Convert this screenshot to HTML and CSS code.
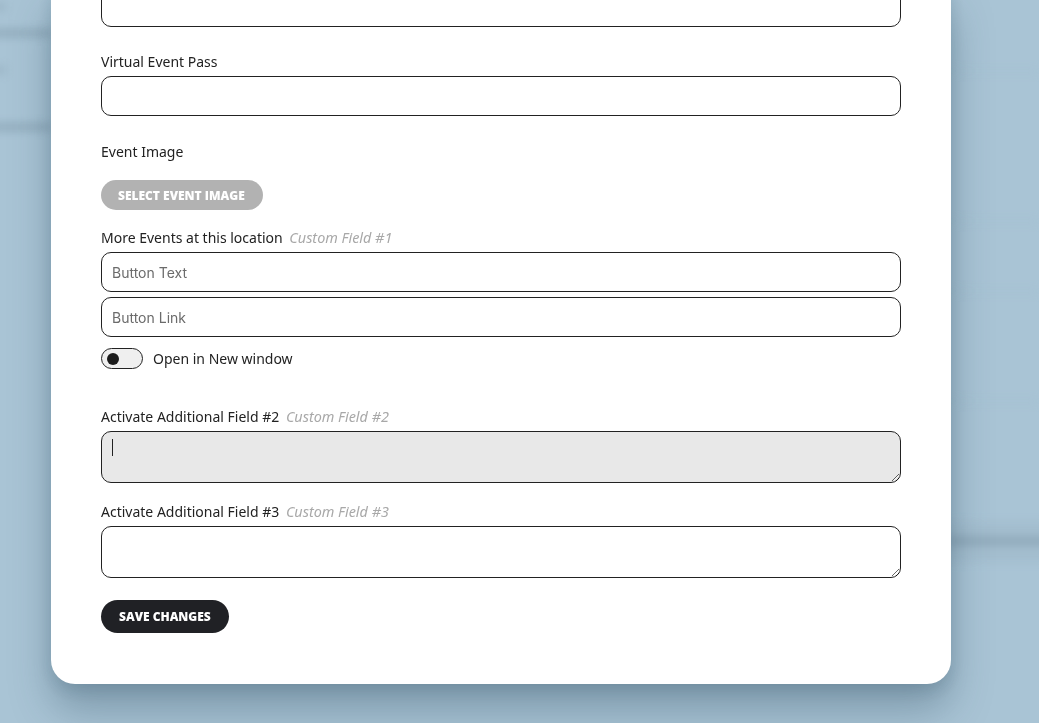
FILE: index.html
```html
<!DOCTYPE html>
<html lang="en">
<head>
<meta charset="utf-8">
<title>Edit Event</title>
<link rel="stylesheet" href="styles.css">
</head>
<body>
  <div class="backdrop" aria-hidden="true">
    <div class="bd-text bd-l1"></div>
    <div class="bd-text bd-l2"></div>
    <div class="bd-dot bd-d1"></div>
    <div class="bd-dot bd-d2"></div>
    <div class="bd-rule bd-r1"></div>
    <div class="bd-rule bd-r2"></div>
    <div class="bd-rule bd-r3"></div>
    <div class="bd-rule bd-r4"></div>
    <div class="bd-band"><span class="bd-band-text"></span></div>
  </div>

  <div class="overlay">
    <form class="modal">
      <div class="field">
        <input class="input" type="text">
      </div>

      <div class="field field-pass">
        <label class="label">Virtual Event Pass</label>
        <input class="input" type="text">
      </div>

      <div class="field field-image">
        <label class="label">Event Image</label>
        <button type="button" class="btn btn-muted">Select Event Image</button>
      </div>

      <div class="field field-more">
        <label class="label">More Events at this location <em class="hint">Custom Field #1</em></label>
        <div class="stack">
          <input class="input" type="text" placeholder="Button Text">
          <input class="input" type="text" placeholder="Button Link">
        </div>
        <div class="toggle-row">
          <span class="toggle"><span class="knob"></span></span>
          <span class="toggle-label">Open in New window</span>
        </div>
      </div>

      <div class="field field-extra2">
        <label class="label">Activate Additional Field #2 <em class="hint">Custom Field #2</em></label>
        <div class="area-wrap">
          <textarea class="area is-focused"></textarea>
          <span class="caret"></span>
        </div>
      </div>

      <div class="field field-extra3">
        <label class="label">Activate Additional Field #3 <em class="hint">Custom Field #3</em></label>
        <div class="area-wrap">
          <textarea class="area"></textarea>
        </div>
      </div>

      <div class="actions">
        <button type="button" class="btn btn-dark">Save Changes</button>
      </div>
    </form>
  </div>
</body>
</html>
```

FILE: styles.css
```css
* {
  box-sizing: border-box;
}

html, body {
  margin: 0;
  height: 100%;
  overflow: hidden;
}

body {
  background: #a9c4d5;
  font-family: "Noto Sans", "Open Sans", sans-serif;
  color: #222;
}

/* Blurred page behind the dialog */
.backdrop {
  position: fixed;
  inset: 0;
  filter: blur(5px);
}

.bd-text {
  position: absolute;
  left: -10px;
  width: 62px;
  height: 6px;
  background: #8aa4b5;
  border-radius: 3px;
}
.bd-l1 { top: 30px; }
.bd-l2 { top: 124px; }

.bd-dot {
  position: absolute;
  left: -4px;
  width: 9px;
  height: 6px;
  background: #93adbe;
}
.bd-d1 { top: 4px; }
.bd-d2 { top: 67px; }

.bd-rule {
  position: absolute;
  left: 950px;
  right: 0;
  height: 2px;
  background: #a4bfd0;
}
.bd-r1 { top: 70px; }
.bd-r2 { top: 220px; }
.bd-r3 { top: 290px; }
.bd-r4 { top: 400px; }

.bd-band {
  position: absolute;
  left: 935px;
  right: -10px;
  top: 522px;
  height: 40px;
  background: #a3bdce;
}
.bd-band-text {
  position: absolute;
  left: 12px;
  right: 0;
  top: 16px;
  height: 6px;
  background: #87a1b2;
  border-radius: 3px;
}

/* Dialog */
.overlay {
  position: fixed;
  inset: 0;
  display: flex;
  align-items: flex-end;
  padding: 0 0 39px 51px;
}

.modal {
  width: 900px;
  background: #fff;
  border-radius: 0 0 24px 24px;
  padding: 0 50px 51px;
  box-shadow: 0 26px 40px rgba(40, 70, 90, 0.34), 0 6px 16px rgba(40, 70, 90, 0.16);
  display: flex;
  flex-direction: column;
}

.field {
  display: flex;
  flex-direction: column;
  margin-bottom: 25px;
}

.label {
  font-size: 14px;
  line-height: 20px;
  margin-bottom: 4px;
  color: #222;
}

.hint {
  font-style: italic;
  font-size: 14.4px;
  color: #a8a8a8;
  margin-left: 3px;
}

.input {
  width: 100%;
  height: 40px;
  border: 1px solid #222;
  border-radius: 10px;
  background: #fff;
  padding: 0 10px;
  font-family: Inter, "Noto Sans", sans-serif;
  font-size: 14px;
  color: #222;
  outline: none;
}
.input::placeholder {
  color: #6b6b6b;
}

.field-pass {
  margin-bottom: 26px;
}

.field-image {
  margin-bottom: 18px;
}
.field-image .label {
  margin-bottom: 18px;
}

.stack {
  display: flex;
  flex-direction: column;
  gap: 5px;
}

.toggle-row {
  display: flex;
  align-items: center;
  gap: 10px;
  margin-top: 11px;
}

.toggle {
  width: 42px;
  height: 21px;
  border: 1px solid #222;
  border-radius: 11px;
  background: #efefef;
  display: flex;
  align-items: center;
  padding-left: 5px;
}

.knob {
  width: 12px;
  height: 12px;
  border-radius: 50%;
  background: #1b1b1b;
}

.toggle-label {
  font-size: 14px;
  line-height: 20px;
}

.field-more {
  margin-bottom: 38px;
}

.field-extra2 {
  margin-bottom: 19px;
}

.field-extra3 {
  margin-bottom: 22px;
}

.area-wrap {
  position: relative;
  display: flex;
}

.area {
  width: 100%;
  height: 52px;
  border: 1px solid #222;
  border-radius: 10px;
  background: #fff;
  padding: 8px 10px;
  font-family: Inter, "Noto Sans", sans-serif;
  font-size: 14px;
  outline: none;
  display: block;
}
.area.is-focused {
  background: #e8e8e8;
}

/* text cursor in the focused area */
.caret {
  position: absolute;
  left: 11px;
  top: 8px;
  width: 1px;
  height: 17px;
  background: #222;
}

.actions {
  display: flex;
}

.btn {
  border: none;
  border-radius: 999px;
  font-family: "Open Sans", "Noto Sans", sans-serif;
  font-weight: 800;
  font-size: 12px;
  text-transform: uppercase;
  color: #fff;
  cursor: pointer;
  align-self: flex-start;
}

.btn-muted {
  background: #b2b2b2;
  height: 30px;
  padding: 0 18px 0 17px;
}

.btn-dark {
  background: #202125;
  height: 33px;
  padding: 0 18px;
}
```
